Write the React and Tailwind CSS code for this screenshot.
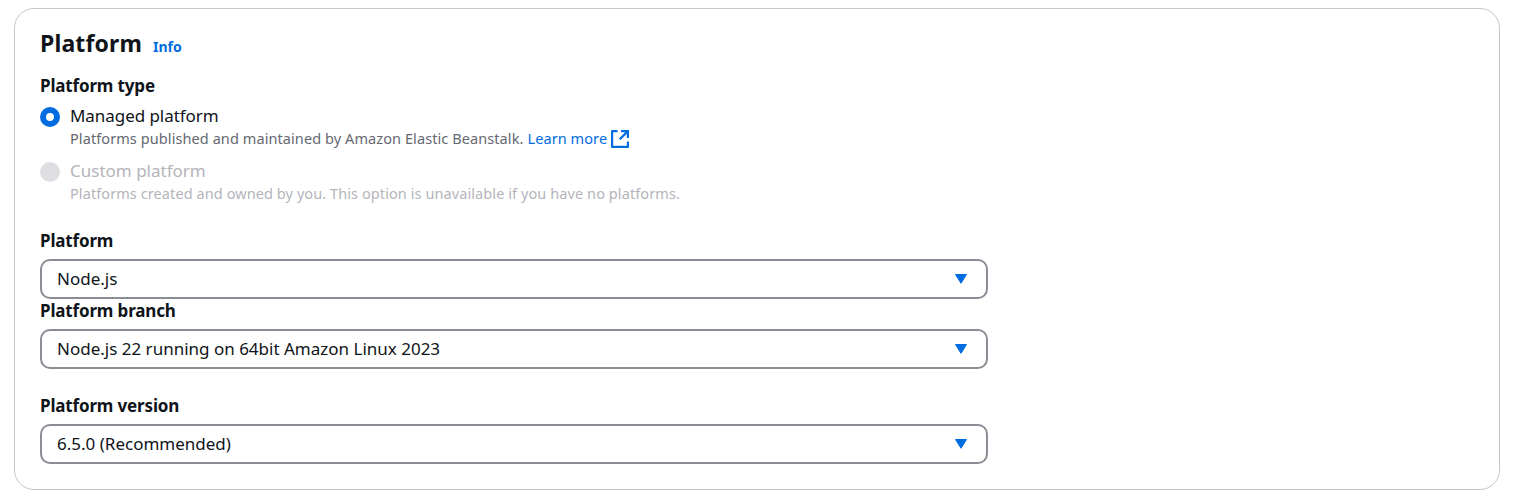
function Caret() {
  return (
    <svg className="mr-[18px] h-3 w-[14px]" viewBox="0 0 14 12" fill="none">
      <path d="M1.5 1.5H12.5L7 10.3Z" fill="#006ce0" stroke="#006ce0" strokeWidth="1" strokeLinejoin="round" />
    </svg>
  );
}

function ExternalIcon() {
  return (
    <svg className="mt-[2px] ml-1 h-[18px] w-[18px]" viewBox="0 0 18 18" fill="none" stroke="#006ce0" strokeWidth="2.2">
      <path d="M6.5 1.1H1.1V16.9H16.9V11.5" strokeLinejoin="round" />
      <path d="M10 1.1H16.9V8M16.9 1.1L8.7 9.3" />
    </svg>
  );
}

function Label({ children }) {
  return <div className="text-[17px] leading-[25px] font-bold tracking-[-0.16px]">{children}</div>;
}

function SelectField({ label, value }) {
  return (
    <div>
      <Label>{label}</Label>
      <button
        type="button"
        className="mt-[6px] flex h-10 w-[948px] items-center justify-between rounded-[10px] border-2 border-[#8c8c94] bg-white pl-[15px] text-left text-[17px] leading-[25px]"
      >
        <span className="pb-0.5">{value}</span>
        <Caret />
      </button>
    </div>
  );
}

export default function App() {
  return (
    <main className="h-[502px] bg-white pt-2 pl-[14px] font-['Noto_Sans',sans-serif] text-[#0f141a]">
      <section className="h-[482px] w-[1486px] rounded-[20px] border border-[#c6c6cd] pt-[19px] pl-[25px]">
        <header className="flex items-baseline gap-[11px]">
          <h2 className="text-[23px] leading-[30px] font-bold tracking-[0.14px]">Platform</h2>
          <a className="text-[14px] leading-5 font-bold text-[#006ce0]">Info</a>
        </header>

        <div className="mt-[15px]">
          <Label>Platform type</Label>
          <div className="mt-[5px] flex gap-[10px]">
            <span className="mt-1 h-5 w-5 rounded-full border-[6px] border-[#006ce0] bg-white" />
            <div>
              <div className="text-[17px] leading-[25px] tracking-[-0.06px]">Managed platform</div>
              <div className="flex h-5 items-center text-[14.5px] leading-5 tracking-[0.085px] text-[#656871]">
                <span>Platforms published and maintained by Amazon Elastic Beanstalk.</span>
                <a className="ml-1 flex items-center text-[#006ce0]">
                  Learn more
                  <ExternalIcon />
                </a>
              </div>
            </div>
          </div>
          <div className="mt-[10px] flex gap-[10px] text-[#b4b4bb]">
            <span className="mt-1 h-5 w-5 rounded-full bg-[#dedee3]" />
            <div>
              <div className="text-[17px] leading-[25px]">Custom platform</div>
              <div className="text-[14.5px] leading-5 tracking-[0.085px]">
                Platforms created and owned by you. This option is unavailable if you have no platforms.
              </div>
            </div>
          </div>
        </div>

        <div className="mt-[25px]">
          <SelectField label="Platform" value="Node.js" />
          <div className="-mt-px">
            <SelectField label="Platform branch" value="Node.js 22 running on 64bit Amazon Linux 2023" />
          </div>
          <div className="mt-6">
            <SelectField label="Platform version" value="6.5.0 (Recommended)" />
          </div>
        </div>
      </section>
    </main>
  );
}
